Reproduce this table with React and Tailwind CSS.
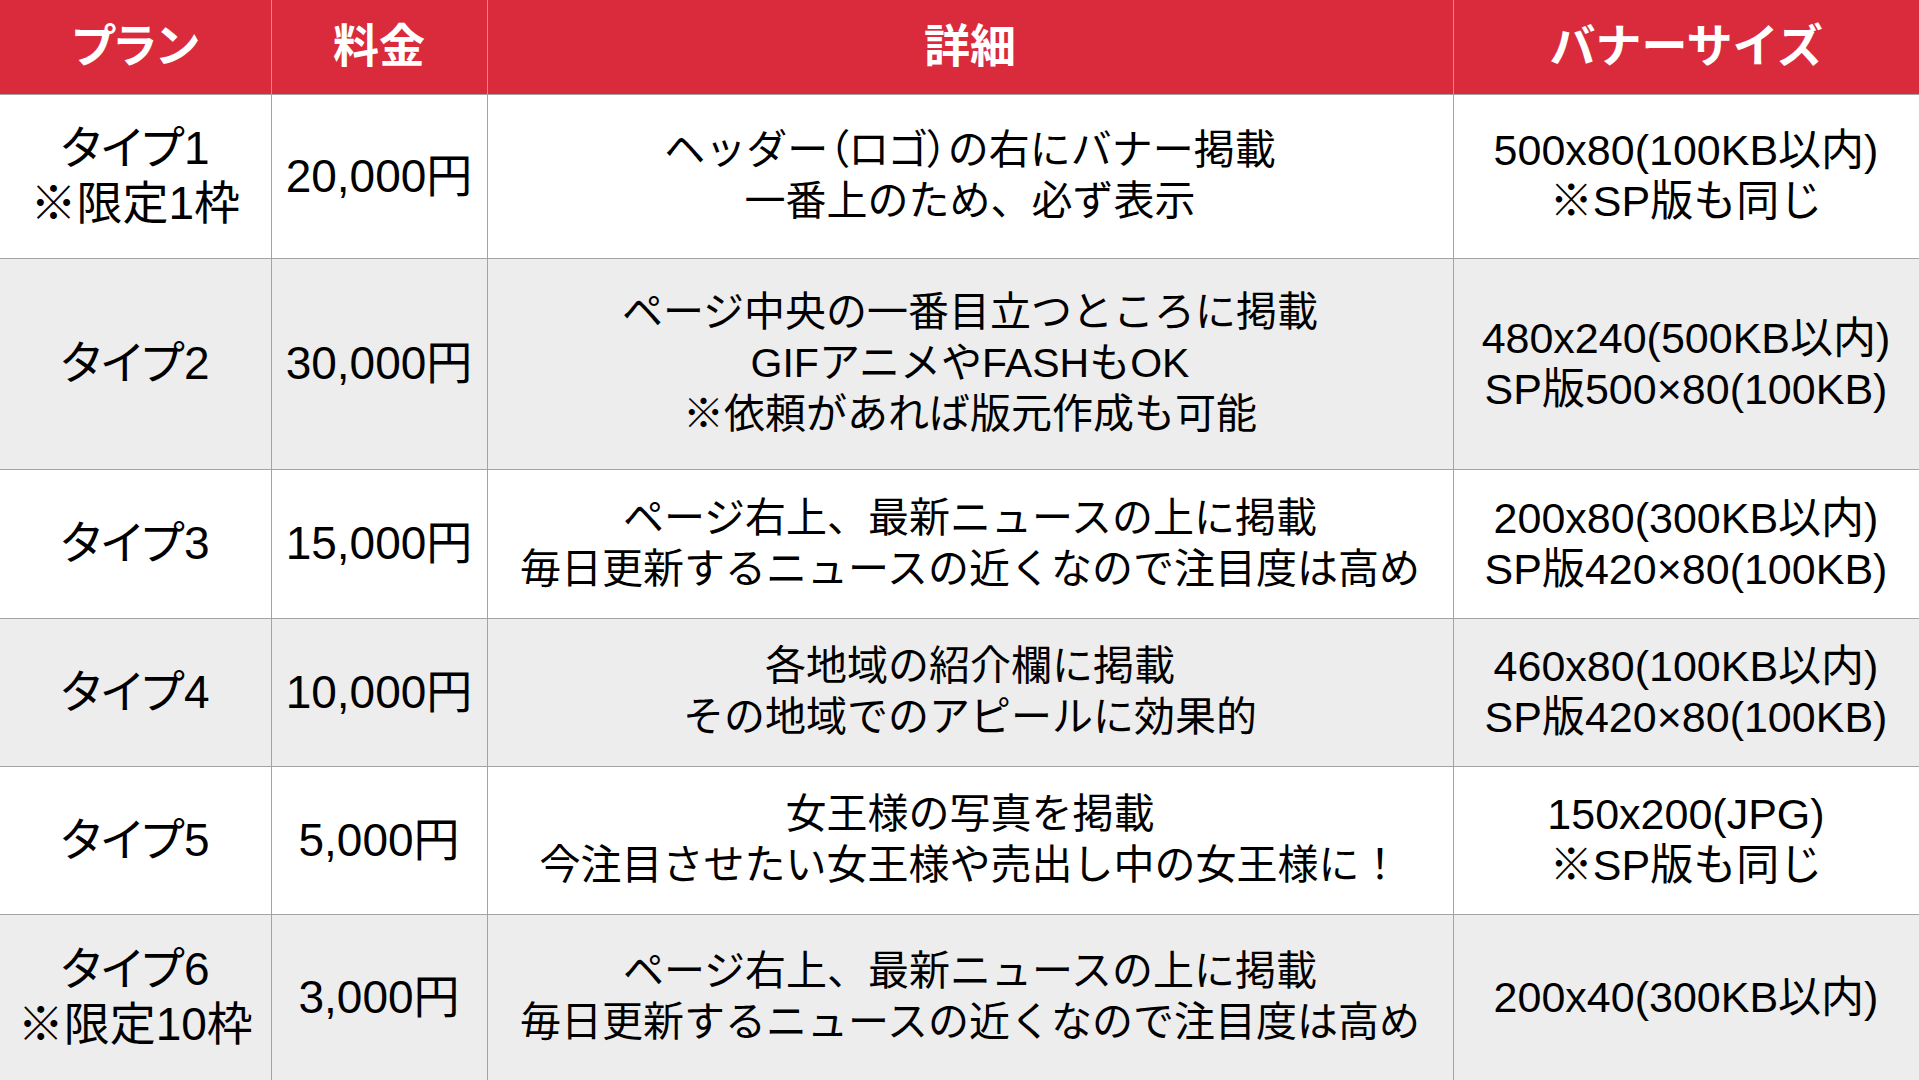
import React from "react";

const rows = [
  {
    plan: ["タイプ1", "※限定1枠"],
    price: "20,000円",
    detail: [
      <>
        ヘッダー<span className="[font-feature-settings:'palt']">（ロゴ）</span>の右にバナー掲載
      </>,
      "一番上のため、必ず表示",
    ],
    size: ["500x80(100KB以内)", "※SP版も同じ"],
    h: "h-[164px]",
  },
  {
    plan: ["タイプ2"],
    price: "30,000円",
    detail: ["ページ中央の一番目立つところに掲載", "GIFアニメやFASHもOK", "※依頼があれば版元作成も可能"],
    size: ["480x240(500KB以内)", "SP版500×80(100KB)"],
    h: "h-[211px]",
  },
  {
    plan: ["タイプ3"],
    price: "15,000円",
    detail: ["ページ右上、最新ニュースの上に掲載", "毎日更新するニュースの近くなので注目度は高め"],
    size: ["200x80(300KB以内)", "SP版420×80(100KB)"],
    h: "h-[149px]",
  },
  {
    plan: ["タイプ4"],
    price: "10,000円",
    detail: ["各地域の紹介欄に掲載", "その地域でのアピールに効果的"],
    size: ["460x80(100KB以内)", "SP版420×80(100KB)"],
    h: "h-[148px]",
  },
  {
    plan: ["タイプ5"],
    price: "5,000円",
    detail: ["女王様の写真を掲載", "今注目させたい女王様や売出し中の女王様に！"],
    size: ["150x200(JPG)", "※SP版も同じ"],
    h: "h-[148px]",
  },
  {
    plan: ["タイプ6", "※限定10枠"],
    price: "3,000円",
    detail: ["ページ右上、最新ニュースの上に掲載", "毎日更新するニュースの近くなので注目度は高め"],
    size: ["200x40(300KB以内)"],
    h: "h-[166px]",
  },
];

function Lines({ items }) {
  return items.map((t, i) => (
    <div key={i} className="whitespace-nowrap">
      {t}
    </div>
  ));
}

export default function App() {
  return (
    <div className="w-[1919px] h-[1080px] overflow-hidden bg-white font-['Liberation_Sans','Noto_Sans_CJK_JP',sans-serif] text-black">
      <table className="w-[1919px] table-fixed border-collapse">
        <colgroup>
          <col className="w-[271px]" />
          <col className="w-[216px]" />
          <col className="w-[966px]" />
          <col className="w-[466px]" />
        </colgroup>
        <thead>
          <tr className="h-[94px] bg-[#d92b3b] text-white text-[46px] font-bold">
            <th className="border-r border-[#e8848d] text-center align-middle [font-feature-settings:'palt']">プラン</th>
            <th className="border-r border-[#e8848d] text-center align-middle">料金</th>
            <th className="border-r border-[#e8848d] text-center align-middle">詳細</th>
            <th className="text-center align-middle">バナーサイズ</th>
          </tr>
        </thead>
        <tbody>
          {rows.map((r, i) => (
            <tr key={i} className={`${r.h} ${i % 2 === 1 ? "bg-[#ededed]" : "bg-white"}`}>
              <td className="border border-l-0 border-[#a3a3a3] text-center align-middle text-[46px] leading-[55px] [font-feature-settings:'palt']">
                <Lines items={r.plan} />
              </td>
              <td className="border border-[#a3a3a3] text-center align-middle text-[46px] leading-[55px]">
                {r.price}
              </td>
              <td className="border border-[#a3a3a3] text-center align-middle text-[41px] leading-[51px]">
                <Lines items={r.detail} />
              </td>
              <td className="border border-[#a3a3a3] text-center align-middle text-[43px] leading-[51px]">
                <Lines items={r.size} />
              </td>
            </tr>
          ))}
        </tbody>
      </table>
    </div>
  );
}
